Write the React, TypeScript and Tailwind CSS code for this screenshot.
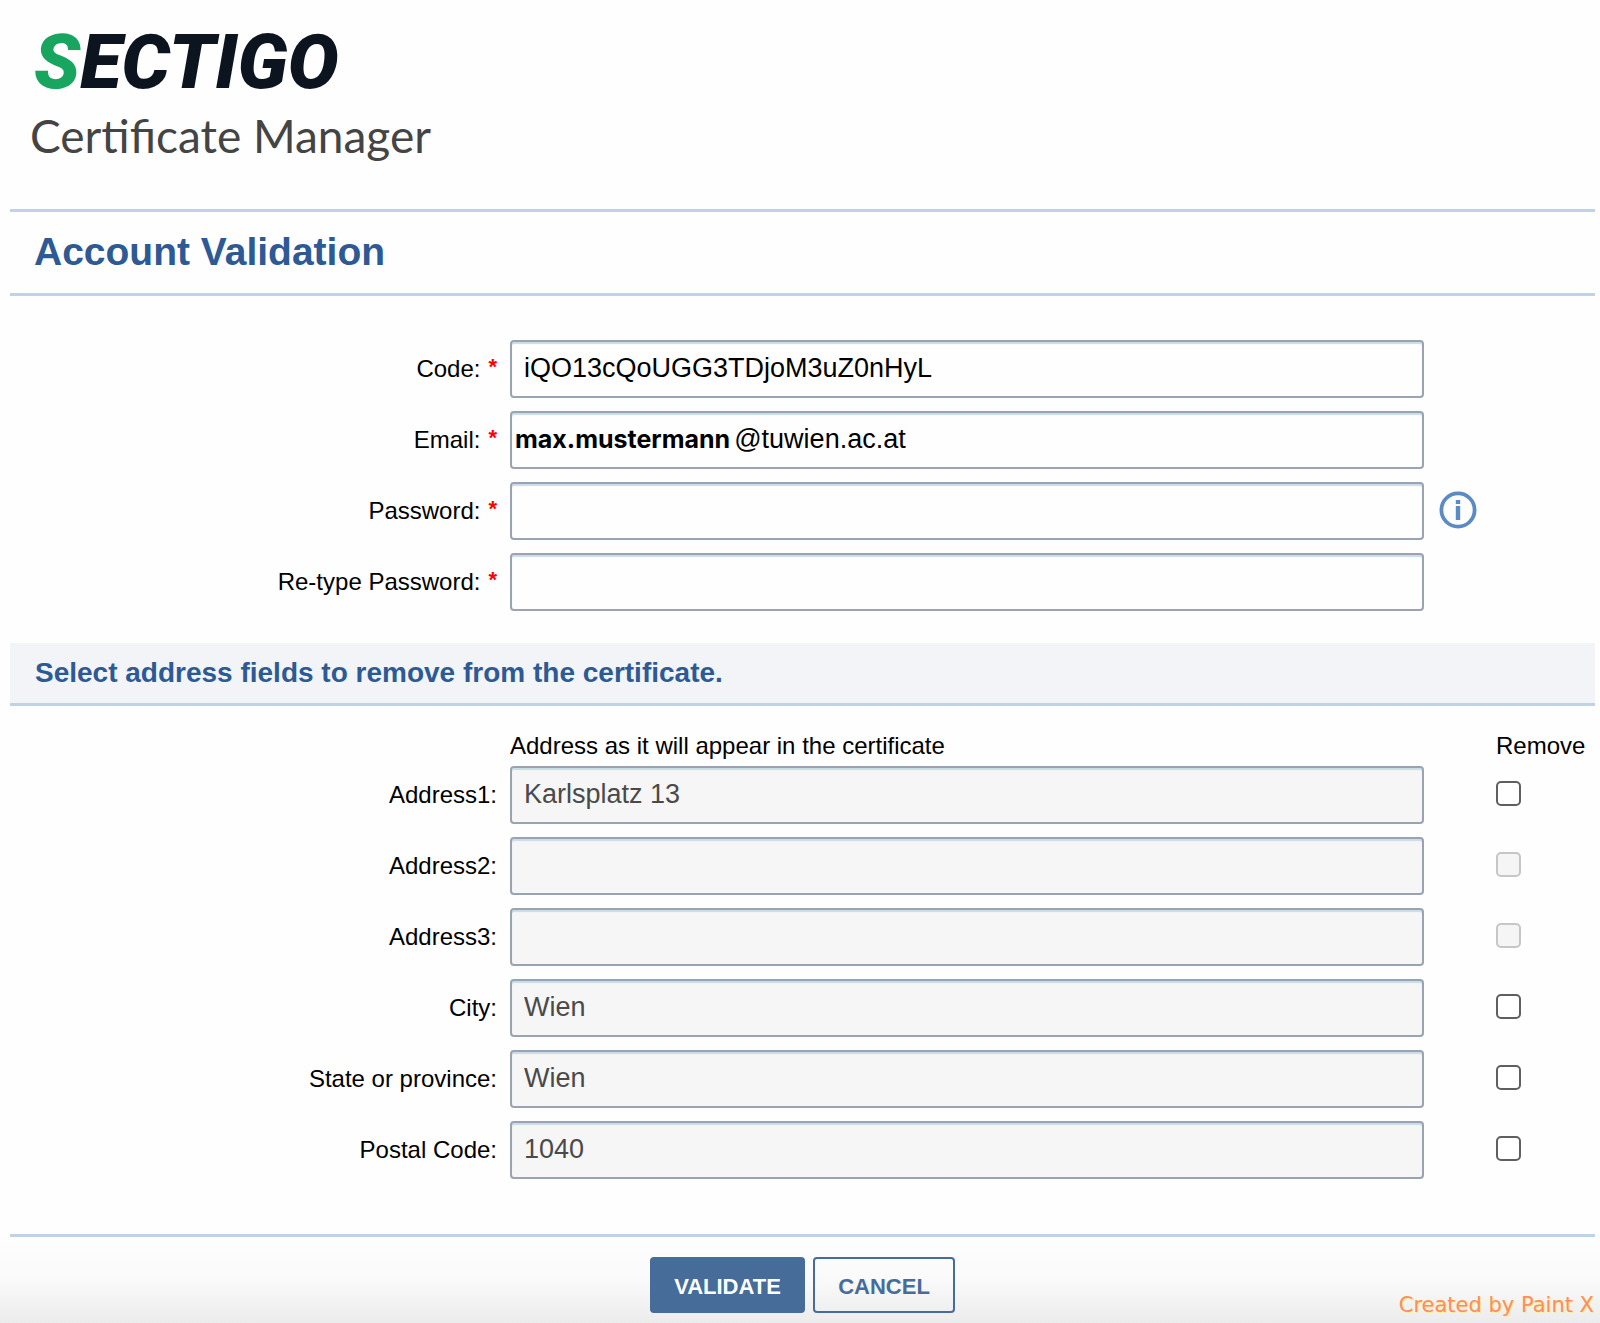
import type { ReactNode } from 'react';

interface FormRowProps {
  id: string;
  label: string;
  required?: boolean;
  children: ReactNode;
  aside?: ReactNode;
}

interface AddressField {
  id: string;
  label: string;
  value: string;
}

const addressFields: AddressField[] = [
  { id: 'address1', label: 'Address1:', value: 'Karlsplatz 13' },
  { id: 'address2', label: 'Address2:', value: '' },
  { id: 'address3', label: 'Address3:', value: '' },
  { id: 'city', label: 'City:', value: 'Wien' },
  { id: 'state', label: 'State or province:', value: 'Wien' },
  { id: 'postalCode', label: 'Postal Code:', value: '1040' },
];

const rowGrid = 'grid grid-cols-[487px_minmax(0,1fr)_158px] items-center gap-x-[13px]';

const fieldBox =
  'h-[58px] w-full rounded-[4px] border-2 border-[#9aa3b3] pb-[2px] text-[27px] shadow-[inset_0_2px_1px_#c9dde5] outline-none';

function FormRow({ id, label, required, children, aside }: FormRowProps) {
  return (
    <div className={rowGrid}>
      <label htmlFor={id} className="text-right">
        {label}
        {required && (
          <span className="ml-2 align-[3px] text-[22px] leading-none font-bold text-[#ff0000]">*</span>
        )}
      </label>
      {children}
      <div className="flex items-center pb-[3px]">{aside}</div>
    </div>
  );
}

function Logo() {
  return (
    <div className="pl-5 pt-5">
      <div className="pl-1 font-['Roboto'] text-[76px] leading-[84px] font-black text-[#0c1420] italic">
        <span className="text-[#17a55f]">S</span>ECTIGO
      </div>
      <div className="font-['Lato'] text-[46px] leading-[64px] text-[#444444]">
        Certificate Manager
      </div>
    </div>
  );
}

function InfoIcon() {
  return (
    <svg width="38" height="38" viewBox="0 0 38 38" fill="none" aria-hidden="true">
      <circle cx="19" cy="19" r="16.6" stroke="#5b8bc5" strokeWidth="3.8" />
      <rect x="16.8" y="9" width="4.4" height="4" fill="#5b8bc5" />
      <rect x="16.8" y="15" width="4.4" height="14" fill="#5b8bc5" />
    </svg>
  );
}

export default function App() {
  return (
    <div className="min-h-screen bg-[#fefefe] font-['Liberation_Sans',sans-serif] text-[24px] leading-8 text-black">
      <header className="h-[209px] pl-[10px]">
        <Logo />
      </header>

      <form>
        <div className="pr-[5px] pl-[10px]">
          <h1 className="border-y-[3px] border-[#c0d1e8] pt-[17px] pb-[19px] pl-6 text-[39px] leading-[45px] font-bold text-[#2d5a94]">
            Account Validation
          </h1>

          <div className="flex flex-col gap-[13px] pt-11 pb-8">
            <FormRow id="code" label="Code:" required>
              <input
                id="code"
                type="text"
                defaultValue="iQO13cQoUGG3TDjoM3uZ0nHyL"
                className={`${fieldBox} px-3`}
              />
            </FormRow>
            <FormRow id="email" label="Email:" required>
              <div className={`${fieldBox} flex items-center gap-1 pl-[3px]`}>
                <span className="font-['Inter'] text-[25px] font-bold">max.mustermann</span>
                <input
                  id="email"
                  type="text"
                  defaultValue="@tuwien.ac.at"
                  className="min-w-0 flex-1 outline-none"
                />
              </div>
            </FormRow>
            <FormRow
              id="password"
              label="Password:"
              required
              aside={
                <button type="button" aria-label="Password rules" className="ml-[2px]">
                  <InfoIcon />
                </button>
              }
            >
              <input id="password" type="password" className={`${fieldBox} px-3`} />
            </FormRow>
            <FormRow id="retype" label="Re-type Password:" required>
              <input id="retype" type="password" className={`${fieldBox} px-3`} />
            </FormRow>
          </div>

          <h2 className="border-b-[3px] border-[#c0d1e8] bg-[#f2f4f8] py-[14px] pl-[25px] text-[28px] leading-8 font-bold text-[#2d5a94]">
            Select address fields to remove from the certificate.
          </h2>

          <div className="pt-6">
            <div className={rowGrid}>
              <span className="col-start-2">Address as it will appear in the certificate</span>
              <span className="pl-[59px]">Remove</span>
            </div>
            <div className="flex flex-col gap-[13px] pt-1 pb-[55px]">
              {addressFields.map((field) => (
                <FormRow
                  key={field.id}
                  id={field.id}
                  label={field.label}
                  aside={
                    <input
                      type="checkbox"
                      aria-label={`Remove ${field.label}`}
                      disabled={!field.value}
                      className="ml-[59px] size-[25px] appearance-none rounded-[5px] border-2 border-[#5f5f5f] bg-white checked:bg-[#466c9a] disabled:border-[#c6c6c6] disabled:bg-[#f5f5f5]"
                    />
                  }
                >
                  <input
                    id={field.id}
                    type="text"
                    readOnly
                    value={field.value}
                    className={`${fieldBox} bg-[#f6f6f6] px-3 text-[#4a4a4a]`}
                  />
                </FormRow>
              ))}
            </div>
          </div>
        </div>

        <footer className="relative bg-linear-to-b from-[#fefefe] via-[#fafafa] to-[#ececec] pr-[5px] pb-[10px] pl-[10px]">
          <div className="flex justify-center gap-2 border-t-[3px] border-[#c0d1e8] pt-5">
            <button
              type="submit"
              className="h-14 w-[155px] rounded-[4px] bg-[#466c9a] pt-1 text-[22px] font-bold text-white"
            >
              VALIDATE
            </button>
            <button
              type="button"
              className="h-14 w-[142px] rounded-[4px] border-2 border-[#466c9a] pt-1 text-[22px] font-bold text-[#466c9a]"
            >
              CANCEL
            </button>
          </div>
          <p className="absolute right-[6px] bottom-[2px] font-['DejaVu_Sans'] text-[21px] leading-8 text-[#ff8c62] [text-shadow:1px_1px_1px_#f7ee8a]">
            Created by Paint X
          </p>
        </footer>
      </form>
    </div>
  );
}
